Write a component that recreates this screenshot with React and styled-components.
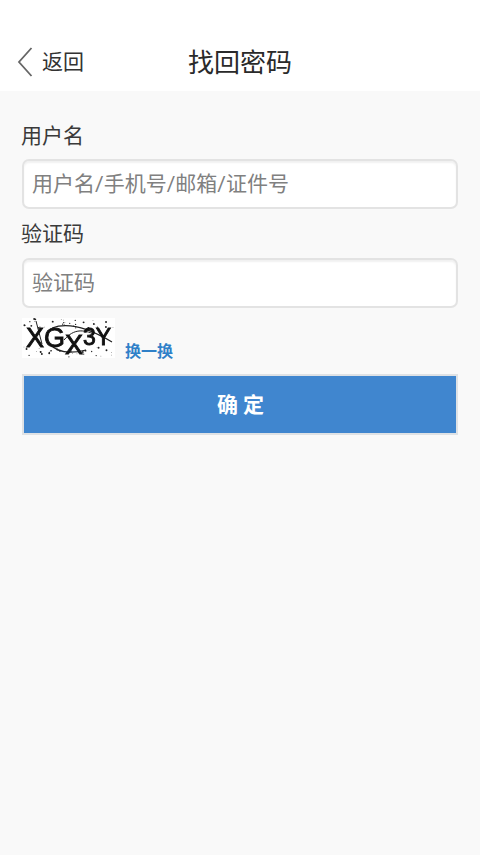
import React from 'react'
import styled, { createGlobalStyle } from 'styled-components'

const Global = createGlobalStyle`
  html, body {
    margin: 0;
    padding: 0;
    background: #f9f9f9;
    font-family: "Roboto", "Noto Sans CJK SC", sans-serif;
  }
`

const Page = styled.div`
  width: 480px;
  height: 855px;
  overflow: hidden;
  background: #f9f9f9;
`

const Header = styled.header`
  height: 91px;
  box-sizing: border-box;
  padding-top: 32px;
  background: #fff;
  display: grid;
  grid-template-columns: 1fr auto 1fr;
  align-items: start;
`

const Back = styled.a`
  display: flex;
  align-items: center;
  gap: 9px;
  height: 59px;
  padding-left: 17px;
  font-size: 21px;
  color: #333;
`

const BackText = styled.span`
  margin-bottom: 4px;
`

const Title = styled.h1`
  margin: 0;
  padding-top: 2px;
  font-size: 26px;
  line-height: 59px;
  font-weight: 400;
  color: #2a2a2a;
`

const Form = styled.form`
  padding: 30px 22px 0;
  display: flex;
  flex-direction: column;
`

const Label = styled.label`
  font-size: 21px;
  line-height: 30px;
  color: #3a3a3a;
  margin-left: -1px;
  margin-bottom: ${p => p.$gap}px;
`

const Input = styled.input`
  width: 100%;
  height: 50px;
  box-sizing: border-box;
  padding: 0 8px;
  margin-bottom: 10px;
  font: inherit;
  font-size: 21px;
  color: #333;
  background: #fff;
  border: 2px solid #e3e3e3;
  border-radius: 7px;
  box-shadow: inset 0 2px 2px rgba(0, 0, 0, 0.06);
  outline: none;
  &::placeholder {
    color: #808080;
    opacity: 1;
  }
`

const CaptchaRow = styled.div`
  display: flex;
  align-items: flex-end;
  gap: 10px;
  margin-bottom: 16px;
  height: 40px;
`

const Refresh = styled.a`
  font-size: 16px;
  font-weight: 700;
  line-height: 20px;
  margin-bottom: -4px;
  color: #2f80c8;
`

const Submit = styled.button`
  height: 61px;
  width: 100%;
  padding: 0 0 3px 6px;
  font: inherit;
  font-size: 21px;
  font-weight: 700;
  letter-spacing: 5px;
  color: #fff;
  background: #4086cf;
  border: 2px solid #dfe2e5;
  border-radius: 0;
`

const CaptchaSvg = styled.svg`
  display: block;
  background: #fff;
  overflow: visible;
  filter: blur(0.45px);
`

// scattered specks, kept to the top and bottom bands of the image
const noise = Array.from({ length: 64 }, (_, i) => {
  const a = Math.abs(Math.sin(i * 12.9898) * 43758.5453) % 1
  const b = Math.abs(Math.sin(i * 78.233) * 12543.123) % 1
  return {
    x: 2 + a * 89,
    y: i % 2 ? 1 + b * 9 : 29 + b * 10,
    r: 0.35 + ((i * 5) % 3) * 0.3,
  }
})

function Captcha() {
  return (
    <CaptchaSvg width="93" height="40" viewBox="0 0 93 40">
      {noise.map((d, i) => (
        <circle key={i} cx={d.x} cy={d.y} r={d.r} fill="#222" />
      ))}
      <path d="M14 3 L20 26" fill="none" stroke="#222" strokeWidth="1" />
      <path d="M30 10 C48 3 70 12 90 24" fill="none" stroke="#222" strokeWidth="1.2" />
      <path d="M42 22 C52 10 62 12 72 16" fill="none" stroke="#222" strokeWidth="1" />
      <path d="M28 26 C38 38 56 34 64 32" fill="none" stroke="#222" strokeWidth="1.2" />
      <text x="4" y="29" fontFamily="Liberation Sans, sans-serif" fontSize="27" fill="#111" stroke="#111" strokeWidth="0.9">
        X<tspan>G</tspan>
        <tspan dy="7">X</tspan>
        <tspan dy="-9" fontSize="23">3</tspan>
        <tspan fontSize="23">Y</tspan>
      </text>
    </CaptchaSvg>
  )
}

export default function App() {
  return (
    <Page>
      <Global />
      <Header>
        <Back>
          <svg width="16" height="30" viewBox="0 0 16 30" fill="none">
            <path d="M14.5 1 L2 15 L14.5 29" stroke="#666" strokeWidth="1.8" />
          </svg>
          <BackText>返回</BackText>
        </Back>
        <Title>找回密码</Title>
        <span />
      </Header>
      <Form>
        <Label $gap={8}>用户名</Label>
        <Input placeholder="用户名/手机号/邮箱/证件号" />
        <Label $gap={9}>验证码</Label>
        <Input placeholder="验证码" />
        <CaptchaRow>
          <Captcha />
          <Refresh>换一换</Refresh>
        </CaptchaRow>
        <Submit type="button">确定</Submit>
      </Form>
    </Page>
  )
}
